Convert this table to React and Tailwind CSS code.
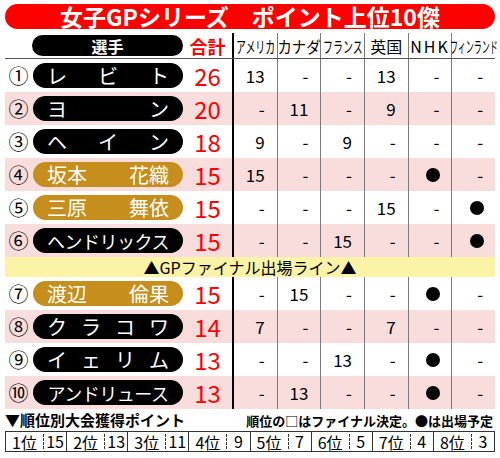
import React from 'react';

const font = { fontFamily: '"Noto Sans CJK JP", "Noto Sans", sans-serif' };

const cols = [
  { label: 'アメリカ', cls: 'scale-x-[0.62]' },
  { label: 'カナダ', cls: 'scale-x-[0.9]' },
  { label: 'フランス', cls: 'scale-x-[0.62]' },
  { label: '英国', cls: '' },
  { label: 'NHK', cls: 'tracking-[2px]' },
  { label: 'フィンランド', cls: 'scale-x-[0.5]' },
];

const D = '●';

const rows = [
  { no: '①', name: ['レ', 'ビ', 'ト'], gold: false, total: 26, pts: ['13', '-', '-', '13', '-', '-'] },
  { no: '②', name: ['ヨ', 'ン'], gold: false, total: 20, pts: ['-', '11', '-', '9', '-', '-'] },
  { no: '③', name: ['ヘ', 'イ', 'ン'], gold: false, total: 18, pts: ['9', '-', '9', '-', '-', '-'] },
  { no: '④', name: ['坂本', '花織'], gold: true, total: 15, pts: ['15', '-', '-', '-', D, '-'] },
  { no: '⑤', name: ['三原', '舞依'], gold: true, total: 15, pts: ['-', '-', '-', '15', '-', D] },
  { no: '⑥', name: ['ヘンドリックス'], gold: false, total: 15, pts: ['-', '-', '15', '-', '-', D] },
  { no: '⑦', name: ['渡辺', '倫果'], gold: true, total: 15, pts: ['-', '15', '-', '-', D, '-'] },
  { no: '⑧', name: ['ク', 'ラ', 'コ', 'ワ'], gold: false, total: 14, pts: ['7', '-', '-', '7', '-', '-'] },
  { no: '⑨', name: ['イ', 'ェ', 'リ', 'ム'], gold: false, total: 13, pts: ['-', '-', '13', '-', D, '-'] },
  { no: '⑩', name: ['アンドリュース'], gold: false, total: 13, pts: ['-', '13', '-', '-', D, '-'] },
];

const ranks = [
  ['1位', '15'], ['2位', '13'], ['3位', '11'], ['4位', '9'],
  ['5位', '7'], ['6位', '5'], ['7位', '4'], ['8位', '3'],
];

function Row({ r, pink }) {
  const single = r.name.length === 1;
  return (
    <div className={`flex h-[33px] ${pink ? 'bg-[#f9dcdc]' : 'bg-white'}`}>
      <div className="flex w-[227px] shrink-0 items-center">
        <span className="w-[27px] shrink-0 text-center text-[20px] leading-none text-black">{r.no}</span>
        <div
          className={`ml-[1px] flex h-[25px] w-[150px] shrink-0 items-center rounded-full px-[14px] text-white ${
            r.gold ? 'bg-[#c68e1c]' : 'bg-black'
          } ${single ? 'justify-center text-[18px] tracking-[-0.5px]' : 'justify-between text-[20px]'}`}
        >
          {r.name.map((n, i) => (
            <span key={i} className="leading-none">{n}</span>
          ))}
        </div>
        <span className="flex-1 text-center text-[24px] leading-none text-[#ff0000]">{r.total}</span>
      </div>
      {r.pts.map((p, i) => (
        <div
          key={i}
          className={`flex w-0 flex-1 items-center justify-end pr-[12px] text-[17px] leading-none text-black ${
            i === 0 ? 'border-l-2 border-black' : 'border-l border-[#7a7a7a]'
          }`}
        >
          {p === D ? <span className="mr-[-1px] h-[14px] w-[14px] rounded-full bg-black" /> : p}
        </div>
      ))}
    </div>
  );
}

export default function App() {
  return (
    <div className="h-[458px] w-[500px] overflow-hidden bg-white px-[5px] pt-[4px] text-black" style={font}>
      <div className="flex h-[25px] items-center justify-center rounded-full bg-[#ff0000] text-[23px] font-bold leading-none text-white">
        女子GPシリーズ　ポイント上位10傑
      </div>

      <div className="mt-[4px] flex h-[26px] border-b border-[#555]">
        <div className="flex w-[227px] shrink-0 items-center">
          <div className="ml-[27px] flex h-[21px] w-[151px] shrink-0 items-center justify-center rounded-full bg-black text-[16px] font-bold leading-none text-white">
            選手
          </div>
          <span className="flex-1 whitespace-nowrap text-center text-[18px] font-bold leading-none text-[#ff0000]">合計</span>
        </div>
        {cols.map((c, i) => (
          <div
            key={i}
            className={`flex w-0 flex-1 items-center justify-center whitespace-nowrap text-[16px] leading-none ${
              i === 0 ? 'border-l-2 border-black' : 'border-l border-[#7a7a7a]'
            }`}
          >
            <span className={`inline-block ${c.cls}`}>{c.label}</span>
          </div>
        ))}
      </div>

      {rows.slice(0, 6).map((r, i) => (
        <Row key={i} r={r} pink={i % 2 === 1} />
      ))}

      <div className="flex h-[20px] items-center justify-center bg-[#fbf3a6] text-[16px] leading-none">
        ▲GPファイナル出場ライン▲
      </div>

      {rows.slice(6).map((r, i) => (
        <Row key={i} r={r} pink={i % 2 === 1} />
      ))}

      <div className="flex h-[22px] items-end justify-between pb-[4px]">
        <span className="text-[15px] font-bold leading-none">▼順位別大会獲得ポイント</span>
        <span className="mr-[2px] text-[13px] font-bold leading-none">順位の□はファイナル決定。●は出場予定</span>
      </div>

      <div className="flex h-[21px] border border-[#333]">
        {ranks.map(([a, b], i) => (
          <div key={i} className={`flex w-0 flex-1 items-center text-[16px] leading-none ${i > 0 ? 'border-l border-[#333]' : ''}`}>
            <span className="w-[37px] shrink-0 whitespace-nowrap text-center">{a}</span>
            <span className="flex-1 whitespace-nowrap border-l border-dashed border-[#333] text-center leading-[15px]">{b}</span>
          </div>
        ))}
      </div>
    </div>
  );
}
